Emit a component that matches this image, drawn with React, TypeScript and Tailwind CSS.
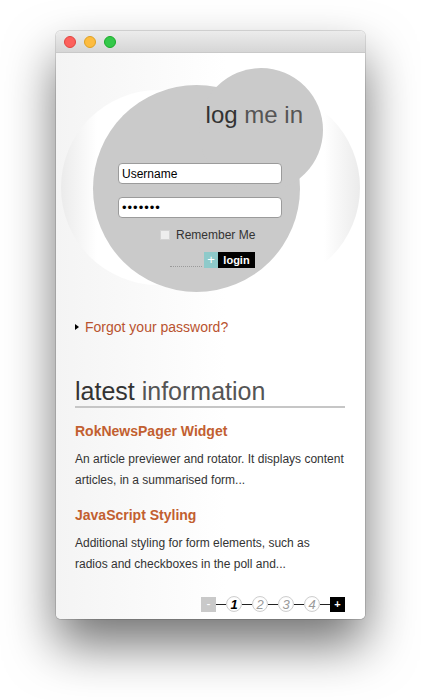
import React from 'react';

const font = { fontFamily: '"Liberation Sans", Arial, sans-serif' };

function TrafficLights() {
  return (
    <div className="flex items-center gap-[8px] pl-[8px]">
      <span className="w-[12px] h-[12px] rounded-full bg-[#fc605c] border border-[#e0443e]" />
      <span className="w-[12px] h-[12px] rounded-full bg-[#fdbc40] border border-[#dea123]" />
      <span className="w-[12px] h-[12px] rounded-full bg-[#34c84a] border border-[#1aab29]" />
    </div>
  );
}

function LoginBox() {
  return (
    <div className="relative h-[247px]">
      {/* backdrop shapes */}
      <div className="absolute left-[5px] top-[37px] w-[299px] h-[195px] rounded-full bg-[linear-gradient(to_right,#ebebeb_0%,#ffffff_12%,#ffffff_88%,#ebebeb_100%)]" />
      <div className="absolute left-[37px] top-[32px] w-[207px] h-[207px] rounded-full bg-[#cacaca]" />
      <div className="absolute left-[143px] top-[15px] w-[124px] h-[124px] rounded-full bg-[#cacaca]" />

      <div className="relative flex flex-col">
        <h2 className="mt-[48px] pr-[62px] text-right text-[24px] leading-[28px] font-normal">
          <span className="text-[#333]">log</span> <span className="text-[#555]">me in</span>
        </h2>

        <input
          readOnly
          value="Username"
          className="mt-[34px] ml-[62px] w-[164px] h-[21px] rounded-[4px] border border-[#9b9b9b] bg-white pl-[3px] text-[12px] text-black outline-none"
          style={font}
        />
        <input
          readOnly
          type="password"
          value="1234567"
          className="mt-[13px] ml-[62px] w-[164px] h-[21px] rounded-[4px] border border-[#9b9b9b] bg-white pl-[3px] text-[13px] tracking-[1px] text-black outline-none"
          style={font}
        />

        <div className="mt-[10px] pl-[104px] flex items-center h-[14px] leading-[14px]">
          <span className="w-[10px] h-[10px] border border-[#d4d4d4] bg-[#eeeeee]" />
          <span className="ml-[6px] text-[12px] text-[#333]">Remember Me</span>
        </div>

        <div className="mt-[10px] pl-[114px] flex items-end h-[16px]">
          <span className="w-[32px] mb-[1px] border-b border-dotted border-[#9a9a9a]" />
          <span className="ml-[2px] w-[14px] h-[16px] bg-[#8ecaca] text-white text-[13px] leading-[16px] text-center">+</span>
          <span className="w-[37px] h-[16px] bg-black text-white text-[11px] font-bold leading-[16px] text-center">login</span>
        </div>
      </div>
    </div>
  );
}

const articles = [
  {
    title: 'RokNewsPager Widget',
    text: 'An article previewer and rotator. It displays content articles, in a summarised form...',
  },
  {
    title: 'JavaScript Styling',
    text: 'Additional styling for form elements, such as radios and checkboxes in the poll and...',
  },
];

function Pager() {
  const pages = [1, 2, 3, 4];
  const line = <span className="w-[10px] h-px bg-[#222]" />;
  return (
    <div className="mt-[21px] flex items-center justify-end h-[16px]">
      <span className="w-[15px] h-[15px] bg-[#c9c9c9] text-white text-[12px] leading-[14px] text-center">-</span>
      {pages.map((p) => (
        <React.Fragment key={p}>
          {line}
          <span
            className={`w-[16px] h-[16px] rounded-full border-[1.5px] border-[#cfcfcf] bg-[radial-gradient(circle,#ffffff_55%,#ececec_100%)] flex items-center justify-center text-[13px] italic leading-none ${
              p === 1 ? 'text-black font-bold' : 'text-[#9a9a9a]'
            }`}
          >
            {p}
          </span>
        </React.Fragment>
      ))}
      {line}
      <span className="w-[15px] h-[15px] bg-black text-white text-[11px] font-bold leading-[15px] text-center">+</span>
    </div>
  );
}

export default function App() {
  return (
    <div className="min-h-[700px] bg-white pt-[31px] pl-[56px]" style={font}>
      <div className="w-[309px] h-[588px] rounded-[5px] overflow-hidden shadow-[0_0_0_1px_rgba(0,0,0,0.12),0_26px_50px_rgba(0,0,0,0.55)] flex flex-col">
        {/* Title bar */}
        <div className="h-[22px] shrink-0 flex items-center bg-[linear-gradient(to_bottom,#ececec,#d6d6d6)] border-b border-[#c9c9c9]">
          <TrafficLights />
        </div>

        {/* Content */}
        <div className="flex-1 flex flex-col bg-[linear-gradient(to_right,#f4f4f4,#ffffff_55%)]">
          <LoginBox />

          <div className="pl-[19px] pr-[20px] flex flex-col">
            <a className="mt-[17px] flex items-center text-[14px] leading-[20px] text-[#b9532f]">
              <svg width="4" height="6" viewBox="0 0 4 6" className="mr-[6px]">
                <path d="M0 0 L4 3 L0 6 Z" fill="#000" />
              </svg>
              Forgot your password?
            </a>

            <h2 className="mt-[39px] text-[25px] leading-[30px] font-normal border-b-2 border-[#c6c6c6]">
              <span className="text-[#333]">latest</span> <span className="text-[#555]">information</span>
            </h2>

            {articles.map((a, i) => (
              <div key={a.title} className={i === 0 ? 'mt-[13px]' : 'mt-[14px]'}>
                <h3 className="text-[14px] leading-[20px] font-bold text-[#c25f30]">{a.title}</h3>
                <p className="mt-[8px] text-[12px] leading-[21px] text-[#333]">{a.text}</p>
              </div>
            ))}

            <Pager />
          </div>
        </div>
      </div>
    </div>
  );
}
